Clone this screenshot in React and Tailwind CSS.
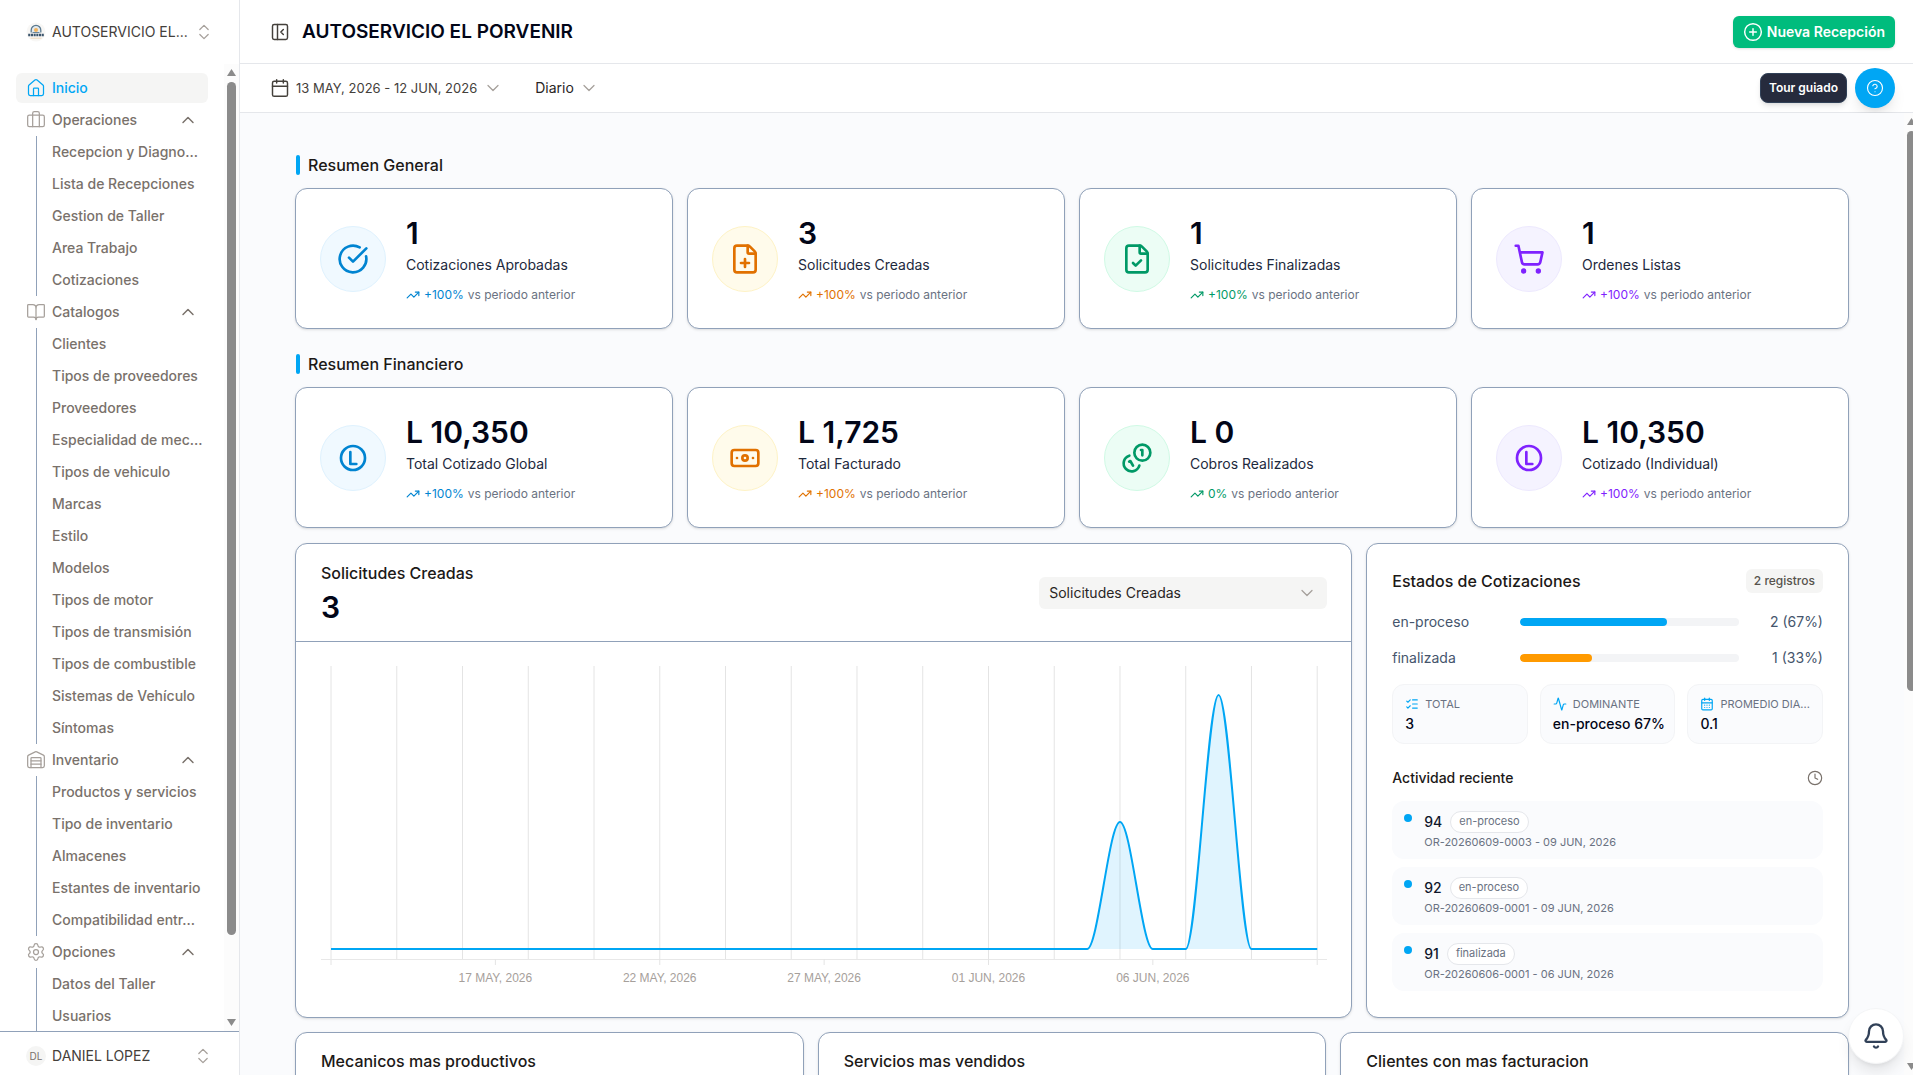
import React, { useState } from 'react'
import {
  Activity, Banknote, Bell, BookOpen, Briefcase, Calendar, CalendarDays, ChevronDown, ChevronUp,
  ChevronsUpDown, CircleCheckBig, CircleHelp, CirclePlus, Clock, FileCheck, FilePlus, House,
  ListChecks, PanelLeftClose, Settings, ShoppingCart, TrendingUp, Warehouse,
} from 'lucide-react'

// ─── Data ────────────────────────────────────────────────────────────────────
const NAV = [
  {
    label: 'Operaciones',
    icon: Briefcase,
    items: ['Recepcion y Diagno...', 'Lista de Recepciones', 'Gestion de Taller', 'Area Trabajo', 'Cotizaciones'],
  },
  {
    label: 'Catalogos',
    icon: BookOpen,
    items: [
      'Clientes', 'Tipos de proveedores', 'Proveedores', 'Especialidad de mec...', 'Tipos de vehiculo',
      'Marcas', 'Estilo', 'Modelos', 'Tipos de motor', 'Tipos de transmisión', 'Tipos de combustible',
      'Sistemas de Vehículo', 'Síntomas',
    ],
  },
  {
    label: 'Inventario',
    icon: Warehouse,
    items: ['Productos y servicios', 'Tipo de inventario', 'Almacenes', 'Estantes de inventario', 'Compatibilidad entr...'],
  },
  { label: 'Opciones', icon: Settings, items: ['Datos del Taller', 'Usuarios'] },
]

const TONES = {
  sky: { circle: 'bg-sky-50 border-sky-100 text-sky-600', text: 'text-sky-600' },
  amber: { circle: 'bg-amber-50 border-amber-100 text-amber-600', text: 'text-amber-600' },
  emerald: { circle: 'bg-emerald-50 border-emerald-100 text-emerald-600', text: 'text-emerald-600' },
  violet: { circle: 'bg-violet-50 border-violet-100 text-violet-600', text: 'text-violet-600' },
}

const GENERAL = [
  { value: '1', label: 'Cotizaciones Aprobadas', change: '+100%', tone: 'sky', icon: CircleCheckBig },
  { value: '3', label: 'Solicitudes Creadas', change: '+100%', tone: 'amber', icon: FilePlus },
  { value: '1', label: 'Solicitudes Finalizadas', change: '+100%', tone: 'emerald', icon: FileCheck },
  { value: '1', label: 'Ordenes Listas', change: '+100%', tone: 'violet', icon: ShoppingCart },
]

const FINANCIAL = [
  { value: 'L 10,350', label: 'Total Cotizado Global', change: '+100%', tone: 'sky', icon: LempiraIcon },
  { value: 'L 1,725', label: 'Total Facturado', change: '+100%', tone: 'amber', icon: Banknote },
  { value: 'L 0', label: 'Cobros Realizados', change: '0%', tone: 'emerald', icon: CoinsIcon },
  { value: 'L 10,350', label: 'Cotizado (Individual)', change: '+100%', tone: 'violet', icon: LempiraIcon },
]

const STATES = [
  { label: 'en-proceso', count: 2, pct: 67, bar: 'bg-sky-500' },
  { label: 'finalizada', count: 1, pct: 33, bar: 'bg-[#ff9a00]' },
]

const TILES = [
  { label: 'TOTAL', value: '3', icon: ListChecks },
  { label: 'DOMINANTE', value: 'en-proceso 67%', icon: Activity },
  { label: 'PROMEDIO DIA...', value: '0.1', icon: CalendarDays },
]

const ACTIVITY = [
  { id: 94, state: 'en-proceso', detail: 'OR-20260609-0003 - 09 JUN, 2026' },
  { id: 92, state: 'en-proceso', detail: 'OR-20260609-0001 - 09 JUN, 2026' },
  { id: 91, state: 'finalizada', detail: 'OR-20260606-0001 - 06 JUN, 2026' },
]

// ─── Icons ───────────────────────────────────────────────────────────────────
function LempiraIcon({ size = 24 }) {
  return (
    <svg width={size} height={size} viewBox="0 0 24 24" fill="none" stroke="currentColor" strokeWidth="2" strokeLinecap="round" strokeLinejoin="round">
      <circle cx="12" cy="12" r="9" />
      <path d="M10 7.5v9h4.5" />
    </svg>
  )
}

function CoinsIcon({ size = 24 }) {
  return (
    <svg width={size} height={size} viewBox="0 0 24 24" fill="none" stroke="currentColor" strokeWidth="2" strokeLinecap="round" strokeLinejoin="round">
      <path d="M13.744 17.736a6 6 0 1 1-7.48-7.48" />
      <path d="M15 6h1v4" />
      <path d="m6.134 14.768.866-.5 2 3.464" />
      <circle cx="16" cy="8" r="6" />
    </svg>
  )
}

function WorkshopLogo() {
  return (
    <svg width="20" height="20" viewBox="0 0 20 20" className="shrink-0">
      <circle cx="10" cy="10" r="9.5" fill="#f8f7f5" />
      <path d="M5.2 10.5V8.2a4.8 4.8 0 0 1 9.6 0v2.3" fill="#e3e9ec" stroke="#5b7a90" strokeWidth="1.3" />
      <circle cx="10" cy="8" r="2" fill="#f2b35c" />
      <path d="M6.5 10.6h7" stroke="#5b7a90" strokeWidth="1" />
      <path d="M2.2 13h15.6" stroke="#3c566d" strokeWidth="2.4" strokeDasharray="2.1 0.6" />
      <path d="M4.5 16.2h11" stroke="#f0d9bb" strokeWidth="1" />
    </svg>
  )
}

// ─── Sidebar ─────────────────────────────────────────────────────────────────
function NavGroup({ label, icon: Icon, items }) {
  const [open, setOpen] = useState(true)
  return (
    <div>
      <button
        type="button"
        onClick={() => setOpen(o => !o)}
        className="flex h-8 w-full items-center gap-1.5 px-2.5 text-left"
      >
        <Icon size={20} strokeWidth={1.5} className="shrink-0 text-stone-400" />
        <span className="flex-1">{label}</span>
        {open ? <ChevronUp size={20} strokeWidth={1.75} /> : <ChevronDown size={20} strokeWidth={1.75} />}
      </button>
      {open && (
        <ul className="ml-5 border-l border-slate-400">
          {items.map(item => (
            <li key={item}>
              <a href="#" className="flex h-8 items-center pl-[15px] whitespace-nowrap">{item}</a>
            </li>
          ))}
        </ul>
      )}
    </div>
  )
}

function Sidebar() {
  return (
    <aside className="flex w-60 shrink-0 flex-col border-r border-gray-200 bg-white">
      <button type="button" className="flex h-16 shrink-0 items-center gap-1.5 pr-[26px] pl-[26px] text-sm text-stone-700">
        <WorkshopLogo />
        <span className="flex-1 text-left whitespace-nowrap">AUTOSERVICIO EL...</span>
        <ChevronsUpDown size={20} strokeWidth={1.5} className="shrink-0 text-stone-400" />
      </button>

      <div className="flex min-h-0 flex-1 overflow-hidden">
        <nav className="min-w-0 flex-1 px-4 pt-2 text-sm font-medium text-stone-500">
          <a href="#" className="my-px flex h-[30px] items-center gap-1.5 rounded-md bg-stone-100 px-2.5 text-sky-500">
            <House size={20} strokeWidth={1.5} />
            Inicio
          </a>
          {NAV.map(group => <NavGroup key={group.label} {...group} />)}
        </nav>
        <div className="flex w-[15px] shrink-0 flex-col items-center bg-[#fcfcfc] py-1">
          <svg width="9" height="8" viewBox="0 0 9 8"><path d="M4.5 1 9 8H0z" fill="#8b8b8b" /></svg>
          <div className="mt-1.5 h-[853px] w-[9px] rounded-full bg-[#8b8b8b]" />
          <svg width="9" height="8" viewBox="0 0 9 8" className="mt-auto"><path d="M4.5 7 9 0H0z" fill="#8b8b8b" /></svg>
        </div>
      </div>

      <button type="button" className="flex h-11 shrink-0 items-center gap-1.5 border-t border-slate-400 pt-1 pr-[26px] pl-[26px] text-sm text-stone-700">
        <span className="flex size-5 items-center justify-center rounded-full bg-stone-100 text-[10px] leading-5 text-stone-500">DL</span>
        <span className="flex-1 text-left">DANIEL LOPEZ</span>
        <ChevronsUpDown size={20} strokeWidth={1.5} className="text-stone-400" />
      </button>
    </aside>
  )
}

// ─── Top bars ────────────────────────────────────────────────────────────────
function Header() {
  return (
    <header className="flex h-16 shrink-0 items-center border-b border-gray-200 bg-white pr-[18px] pl-[30px]">
      <button type="button" aria-label="Ocultar menú" className="text-stone-700">
        <PanelLeftClose size={20} strokeWidth={1.75} />
      </button>
      <h1 className="ml-3 flex-1 text-[19px] leading-7 font-semibold text-slate-950">AUTOSERVICIO EL PORVENIR</h1>
      <button type="button" className="flex h-8 items-center gap-1 rounded-md bg-emerald-500 px-2.5 text-sm font-semibold text-white shadow-sm">
        <CirclePlus size={20} strokeWidth={1.75} />
        Nueva Recepción
      </button>
    </header>
  )
}

function Toolbar() {
  return (
    <div className="flex h-[49px] shrink-0 items-center border-b border-gray-200 bg-white pr-[18px] pl-[30px] text-sm text-stone-700">
      <button type="button" className="flex items-center gap-1.5 text-[13px] leading-5">
        <Calendar size={20} strokeWidth={1.75} />
        13 MAY, 2026 - 12 JUN, 2026
        <ChevronDown size={20} strokeWidth={1.5} className="text-stone-400" />
      </button>
      <div className="relative ml-8 flex items-center">
        <select aria-label="Agrupación" className="w-16 appearance-none bg-transparent text-stone-800 outline-none">
          <option>Diario</option>
          <option>Semanal</option>
          <option>Mensual</option>
        </select>
        <ChevronDown size={20} strokeWidth={1.5} className="pointer-events-none absolute right-0 text-stone-400" />
      </div>
      <div className="ml-auto flex items-center gap-2">
        <span className="flex h-[30px] items-center rounded-lg border border-slate-700 bg-[#262b3d] px-2 text-xs font-semibold text-white shadow-md">
          Tour guiado
        </span>
        <button type="button" aria-label="Ayuda" className="flex size-10 items-center justify-center rounded-full bg-sky-500 text-white shadow-lg">
          <CircleHelp size={18} strokeWidth={1.5} />
        </button>
      </div>
    </div>
  )
}

// ─── Summary cards ───────────────────────────────────────────────────────────
function StatCard({ value, label, change, tone, icon: Icon }) {
  return (
    <div className="flex min-h-[141px] items-center gap-5 rounded-xl border border-slate-400 bg-white px-6 shadow-sm">
      <div className={`flex size-[66px] shrink-0 items-center justify-center rounded-full border ${TONES[tone].circle}`}>
        <Icon size={32} />
      </div>
      <div>
        <p className="text-3xl font-semibold text-slate-950">{value}</p>
        <p className="mt-1 text-sm text-slate-800">{label}</p>
        <p className="mt-3 flex items-center gap-1 text-xs text-gray-500">
          <TrendingUp size={14} className={TONES[tone].text} />
          <span className={TONES[tone].text}>{change}</span>
          <span>vs periodo anterior</span>
        </p>
      </div>
    </div>
  )
}

function Summary({ title, cards }) {
  return (
    <section className="flex flex-col gap-[11px]">
      <div className="flex h-6 items-center gap-2 pl-px">
        <span className="h-5 w-1 rounded-sm bg-sky-500" />
        <h2 className="text-base font-medium text-stone-900">{title}</h2>
      </div>
      <div className="grid grid-cols-4 gap-3.5">
        {cards.map(card => <StatCard key={card.label} {...card} />)}
      </div>
    </section>
  )
}

// ─── Chart ───────────────────────────────────────────────────────────────────
const X0 = 10
const DAY = 986 / 30
const BASE = 283
const dayX = d => X0 + d * DAY

// flat tangents at both ends of every step
function curve(points) {
  return points
    .map(([x, y], i) => {
      if (i === 0) return `M${x} ${y}`
      const [px, py] = points[i - 1]
      const dx = (x - px) / 3
      return `C${px + dx} ${py} ${x - dx} ${y} ${x} ${y}`
    })
    .join('')
}

const LINE = curve([
  [dayX(0), BASE], [dayX(23), BASE], [dayX(24), 156], [dayX(25), BASE],
  [dayX(26), BASE], [dayX(27), 29], [dayX(28), BASE], [dayX(30), BASE],
])

const TICKS = [
  { day: 5, label: '17 MAY, 2026' },
  { day: 10, label: '22 MAY, 2026' },
  { day: 15, label: '27 MAY, 2026' },
  { day: 20, label: '01 JUN, 2026' },
  { day: 25, label: '06 JUN, 2026' },
]

function RequestsChart() {
  return (
    <div className="flex flex-col rounded-xl border border-slate-400 bg-white shadow-sm">
      <div className="flex h-[98px] items-center justify-between border-b border-slate-400 pr-6 pl-[25px]">
        <div>
          <h2 className="text-base font-medium text-stone-900">Solicitudes Creadas</h2>
          <p className="mt-1 text-3xl font-semibold text-slate-950">3</p>
        </div>
        <div className="relative flex w-72 items-center">
          <select aria-label="Indicador" className="h-8 w-full appearance-none rounded-md bg-stone-100 px-2.5 text-sm text-stone-800 outline-none">
            <option>Solicitudes Creadas</option>
            <option>Solicitudes Finalizadas</option>
          </select>
          <ChevronDown size={20} strokeWidth={1.5} className="pointer-events-none absolute right-2.5 text-stone-400" />
        </div>
      </div>
      <div className="pt-6 pr-6 pb-[23px] pl-[25px]">
        <svg viewBox="0 0 1006 328" className="block h-auto w-full">
          {Array.from({ length: 16 }, (_, i) => (
            <line key={i} x1={dayX(i * 2)} x2={dayX(i * 2)} y1="0" y2={i % 15 ? 293 : 299} stroke="#e4e4e4" />
          ))}
          <line x1="0" x2="1006" y1="293.5" y2="293.5" stroke="#e8e8e8" />
          <path d={`${LINE}Z`} fill="#00a6f4" fillOpacity="0.12" />
          <path d={LINE} fill="none" stroke="#00a6f4" strokeWidth="2" />
          {TICKS.map(({ day, label }) => (
            <g key={day}>
              <line x1={dayX(day)} x2={dayX(day)} y1="293" y2="299" stroke="#e4e4e4" />
              <text x={dayX(day)} y="316" textAnchor="middle" className="fill-stone-400 font-['Liberation_Sans',sans-serif] text-xs">
                {label}
              </text>
            </g>
          ))}
        </svg>
      </div>
    </div>
  )
}

// ─── Quote states ────────────────────────────────────────────────────────────
function QuoteStates() {
  return (
    <div className="rounded-xl border border-slate-400 bg-white px-[25px] py-6 shadow-sm">
      <div className="flex h-[26px] items-center justify-between">
        <h2 className="text-base font-medium text-stone-900">Estados de Cotizaciones</h2>
        <span className="flex h-6 items-center rounded-md bg-stone-100 px-2 text-xs font-medium text-stone-600">2 registros</span>
      </div>

      <div className="mt-[18px] flex flex-col gap-4 text-sm text-slate-600">
        {STATES.map(({ label, count, pct, bar }) => (
          <div key={label} className="flex items-center">
            <span className="w-32">{label}</span>
            <div className="h-2 flex-1 overflow-hidden rounded-full bg-gray-100">
              <div className={`h-full rounded-full ${bar}`} style={{ width: `${pct}%` }} />
            </div>
            <span className="w-[84px] text-right">{count} ({pct}%)</span>
          </div>
        ))}
      </div>

      <div className="mt-4 grid grid-cols-3 gap-3">
        {TILES.map(({ label, value, icon: Icon }) => (
          <div key={label} className="min-w-0 rounded-xl border border-gray-100 bg-[#fafbfd] px-3 py-[9px]">
            <p className="flex items-center gap-1.5 text-[11px] leading-5 whitespace-nowrap text-gray-500">
              <Icon size={14} className="shrink-0 text-sky-500" />
              {label}
            </p>
            <p className="text-sm font-medium whitespace-nowrap text-slate-950">{value}</p>
          </div>
        ))}
      </div>

      <div className="mt-6 flex items-center justify-between">
        <h3 className="text-sm font-medium text-stone-900">Actividad reciente</h3>
        <Clock size={16} strokeWidth={1.75} className="text-stone-500" />
      </div>
      <ul className="mt-[13px] flex flex-col gap-2">
        {ACTIVITY.map(({ id, state, detail }) => (
          <li key={id} className="flex gap-3 rounded-xl bg-[#fafbfd] px-3 py-[9px]">
            <span className="mt-1 size-2 rounded-full bg-sky-500" />
            <div>
              <p className="flex h-6 items-center gap-2 text-sm font-medium text-slate-900">
                {id}
                <span className="flex h-[22px] items-center rounded-full border border-gray-200 bg-white px-2 text-[11px] font-normal text-gray-500">
                  {state}
                </span>
              </p>
              <p className="text-[11px] leading-4 text-gray-500">{detail}</p>
            </div>
          </li>
        ))}
      </ul>
    </div>
  )
}

// ─── Page ────────────────────────────────────────────────────────────────────
export default function App() {
  return (
    <div className="flex h-screen overflow-hidden bg-white font-['Inter',sans-serif]">
      <Sidebar />
      <div className="flex min-w-0 flex-1 flex-col">
        <Header />
        <Toolbar />
        <div className="flex min-h-0 flex-1 overflow-hidden bg-[#fafbfd]">
          <main className="flex min-w-0 flex-1 flex-col px-[55px] pt-10">
            <Summary title="Resumen General" cards={GENERAL} />
            <div className="mt-[23px]">
              <Summary title="Resumen Financiero" cards={FINANCIAL} />
            </div>
            <div className="mt-[15px] grid grid-cols-[2.19fr_1fr] gap-3.5">
              <RequestsChart />
              <QuoteStates />
            </div>
            <div className="mt-3.5 grid grid-cols-3 gap-3.5">
              {['Mecanicos mas productivos', 'Servicios mas vendidos', 'Clientes con mas facturacion'].map(title => (
                <div key={title} className="h-80 rounded-xl border border-slate-400 bg-white px-[25px] pt-4 shadow-sm">
                  <h2 className="text-base font-medium text-stone-900">{title}</h2>
                </div>
              ))}
            </div>
          </main>
          <div className="flex w-[9px] shrink-0 flex-col overflow-hidden bg-[#fcfcfc] py-1 pl-[3px]">
            <svg width="9" height="8" viewBox="0 0 9 8" className="shrink-0"><path d="M4.5 1 9 8H0z" fill="#8b8b8b" /></svg>
            <div className="mt-1.5 h-[560px] w-[9px] rounded-full bg-[#8b8b8b]" />
            <svg width="9" height="8" viewBox="0 0 9 8" className="mt-auto shrink-0"><path d="M4.5 7 9 0H0z" fill="#8b8b8b" /></svg>
          </div>
        </div>
      </div>
      <button
        type="button"
        aria-label="Notificaciones"
        className="fixed right-[9px] bottom-[11px] flex size-14 items-center justify-center rounded-full border border-gray-100 bg-white text-slate-700 shadow-lg"
      >
        <Bell size={28} />
      </button>
    </div>
  )
}
